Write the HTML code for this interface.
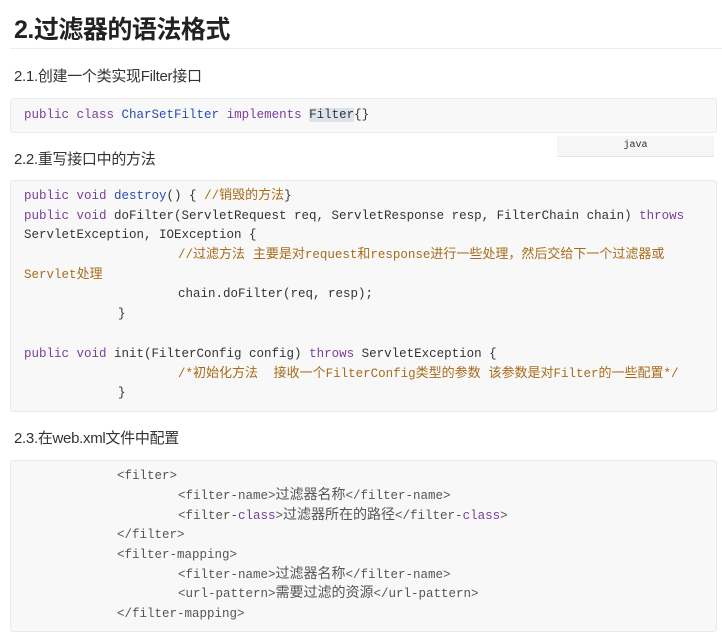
<!DOCTYPE html>
<html><head><meta charset="utf-8"><style>
body{margin:0;width:722px;height:634px;background:#fff;position:relative;overflow:hidden;font-family:"Liberation Sans","Noto Sans CJK SC",sans-serif;color:#333}
.a{position:absolute;white-space:nowrap}
h1{position:absolute;left:14px;top:10px;margin:0;font-size:25px;font-weight:bold;color:#222;letter-spacing:-0.5px}
.hr{position:absolute;left:10px;top:48px;width:712px;height:1px;background:#eee}
.p{font-size:15px;color:#333;letter-spacing:-0.3px}
.box{position:absolute;left:10px;width:705px;background:#f8f8f8;border:1px solid #eaeaea;border-radius:3px}
.c{font-family:"Liberation Mono","Noto Sans CJK SC",monospace;font-size:12.5px;color:#333;line-height:16px}
.k{color:#7a3e9d}.b{color:#2a4bb0}.m{color:#a86b1a}.g{color:#555}
.cj{font-size:13px}
.cx{font-size:14px}
</style></head><body>
<h1>2.过滤器的语法格式</h1>
<div class="hr"></div>
<div class="a p" style="left:14px;top:65px">2.1.创建一个类实现Filter接口</div>
<div class="box" style="top:98px;height:33px"></div>
<div class="a c" style="left:24px;top:107px"><span class="k">public class</span> <span class="b">CharSetFilter</span> <span class="k">implements</span> <span style="background:#dde3ea">Filter</span>{}</div>
<div class="a" style="left:557px;top:136px;width:157px;height:20px;background:#f6f6f6;border-bottom:1px solid #e4e4e4;font-family:'Liberation Mono',monospace;font-size:10px;text-align:center;line-height:19px;color:#333">java</div>
<div class="a p" style="left:14px;top:148px">2.2.重写接口中的方法</div>
<div class="box" style="top:180px;height:230px"></div>
<div class="a c" style="left:24px;top:188px"><span class="k">public void</span> <span class="b">destroy</span>() { <span class="m">//<span class="cj">销毁的方法</span></span>}</div>
<div class="a c" style="left:24px;top:208px"><span class="k">public void</span> doFilter(ServletRequest req, ServletResponse resp, FilterChain chain) <span class="k">throws</span></div>
<div class="a c" style="left:24px;top:227px">ServletException, IOException {</div>
<div class="a c m" style="left:178px;top:247px">//<span class="cj">过滤方法 主要是对</span>request<span class="cj">和</span>response<span class="cj">进行一些处理，然后交给下一个过滤器或</span></div>
<div class="a c m" style="left:24px;top:267px">Servlet<span class="cj">处理</span></div>
<div class="a c" style="left:178px;top:286px">chain.doFilter(req, resp);</div>
<div class="a c" style="left:118px;top:306px">}</div>
<div class="a c" style="left:24px;top:346px"><span class="k">public void</span> init(FilterConfig config) <span class="k">throws</span> ServletException {</div>
<div class="a c m" style="left:178px;top:366px">/*<span class="cj">初始化方法&nbsp;&nbsp;接收一个</span>FilterConfig<span class="cj">类型的参数 该参数是对</span>Filter<span class="cj">的一些配置</span>*/</div>
<div class="a c" style="left:118px;top:385px">}</div>
<div class="a p" style="left:14px;top:427px">2.3.在web.xml文件中配置</div>
<div class="box" style="top:460px;height:170px"></div>
<div class="a c g" style="left:117px;top:468px">&lt;filter&gt;</div>
<div class="a c g" style="left:178px;top:488px">&lt;filter-name&gt;<span class="cx">过滤器名称</span>&lt;/filter-name&gt;</div>
<div class="a c g" style="left:178px;top:508px">&lt;filter-<span class="k">class</span>&gt;<span class="cx">过滤器所在的路径</span>&lt;/filter-<span class="k">class</span>&gt;</div>
<div class="a c g" style="left:117px;top:527px">&lt;/filter&gt;</div>
<div class="a c g" style="left:117px;top:547px">&lt;filter-mapping&gt;</div>
<div class="a c g" style="left:178px;top:567px">&lt;filter-name&gt;<span class="cx">过滤器名称</span>&lt;/filter-name&gt;</div>
<div class="a c g" style="left:178px;top:586px">&lt;url-pattern&gt;<span class="cx">需要过滤的资源</span>&lt;/url-pattern&gt;</div>
<div class="a c g" style="left:117px;top:606px">&lt;/filter-mapping&gt;</div>
</body></html>
